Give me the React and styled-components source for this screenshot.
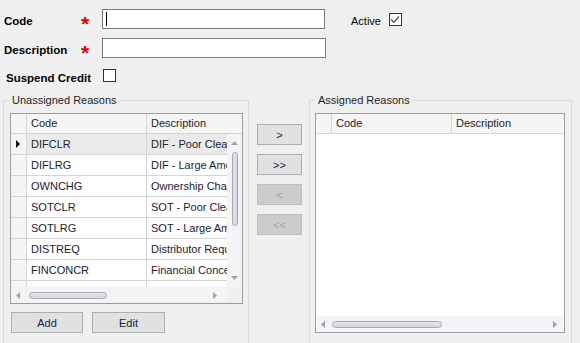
import React from "react";
import styled, { createGlobalStyle } from "styled-components";

const GlobalStyle = createGlobalStyle`
  html, body {
    margin: 0;
    padding: 0;
    background: #f0f0f0;
    font-family: "Liberation Sans", Arial, sans-serif;
    font-size: 11px;
    color: #1e1e1e;
  }
`;

const unassigned = [
  { code: "DIFCLR", desc: "DIF - Poor Clearance", current: true },
  { code: "DIFLRG", desc: "DIF - Large Amount" },
  { code: "OWNCHG", desc: "Ownership Change" },
  { code: "SOTCLR", desc: "SOT - Poor Clearance" },
  { code: "SOTLRG", desc: "SOT - Large Amount" },
  { code: "DISTREQ", desc: "Distributor Request" },
  { code: "FINCONCR", desc: "Financial Concern" },
  { code: "LEGAL", desc: "Legal Action" },
];

const Page = styled.div`
  width: 580px;
  height: 343px;
  overflow: hidden;
  padding-top: 9px;
  box-sizing: border-box;
`;

const FormRow = styled.div`
  display: flex;
  align-items: center;
  height: ${(p) => p.$height || 20}px;
  margin-top: ${(p) => p.$gap || 0}px;
`;

const Label = styled.div`
  width: ${(p) => p.$width}px;
  flex-shrink: 0;
  padding-left: ${(p) => p.$indent || 4}px;
  padding-top: 4px;
  font-size: 11.5px;
  font-weight: bold;
  color: #000;
  box-sizing: border-box;
  white-space: nowrap;
`;

const Required = styled.div`
  width: 21px;
  height: 20px;
  flex-shrink: 0;
  color: #e00000;
  font-weight: bold;
  font-size: 21px;
  line-height: 20px;
  padding-top: 5px;
  box-sizing: border-box;
`;

const TextField = styled.div`
  width: ${(p) => p.$width}px;
  height: 20px;
  flex-shrink: 0;
  box-sizing: border-box;
  border: 1px solid #7a7a7a;
  background: #fff;
  display: flex;
  align-items: center;
`;

const Caret = styled.span`
  width: 1px;
  height: 14px;
  margin-left: 3px;
  background: #000;
`;

const PlainLabel = styled.span`
  margin-left: 26px;
  margin-right: 8px;
  color: #000;
  padding-top: 3px;
`;

const CheckBox = styled.div`
  width: 13px;
  height: 13px;
  box-sizing: border-box;
  border: 1px solid #333;
  background: #fff;
  display: flex;
  align-items: center;
  justify-content: center;
`;

const Main = styled.div`
  display: flex;
  align-items: flex-start;
  margin-top: 11px;
`;

const Group = styled.fieldset`
  margin: 0 0 0 ${(p) => p.$left}px;
  padding: 0;
  width: ${(p) => p.$width}px;
  height: 262px;
  min-width: 0;
  flex-shrink: 0;
  box-sizing: border-box;
  border: 1px solid #dcdcdc;
  display: flex;
  flex-direction: column;
`;

const Legend = styled.legend`
  margin-left: 6px;
  padding: 0 2px;
  line-height: 14px;
  color: #1e1e1e;
`;

const Grid = styled.div`
  width: ${(p) => p.$width}px;
  height: ${(p) => p.$height}px;
  margin: 6px 0 0 ${(p) => p.$left}px;
  box-sizing: border-box;
  border: 1px solid #9b9ba6;
  background: #fff;
  display: flex;
  flex-direction: column;
  overflow: hidden;
`;

const HeaderRow = styled.div`
  display: grid;
  grid-template-columns: 16px 120px 1fr;
  height: 20px;
  box-sizing: border-box;
  border-bottom: 1px solid #d5d5d5;
  background: #f5f5f5;
  flex-shrink: 0;
`;

const HeaderCell = styled.div`
  border-right: ${(p) => (p.$last ? "none" : "1px solid #d5d5d5")};
  padding-left: 4px;
  line-height: 19px;
  color: #1e1e1e;
  white-space: nowrap;
  overflow: hidden;
`;

const Body = styled.div`
  flex: 1;
  display: flex;
  min-height: 0;
  overflow: hidden;
`;

const Rows = styled.div`
  flex: 1;
  min-width: 0;
  overflow: hidden;
`;

const DataRow = styled.div`
  display: grid;
  grid-template-columns: 16px 120px 1fr;
  height: 21px;
  box-sizing: border-box;
  border-bottom: 1px solid #d5d5d5;
  background: ${(p) => (p.$current ? "#eaeaea" : "#fff")};
`;

const RowHeader = styled.div`
  border-right: 1px solid #d5d5d5;
  background: #f5f5f5;
  display: flex;
  align-items: center;
  justify-content: center;
`;

const Cell = styled.div`
  border-right: ${(p) => (p.$last ? "none" : "1px solid #d5d5d5")};
  padding-left: 4px;
  line-height: 20px;
  color: #1c1c30;
  white-space: nowrap;
  overflow: hidden;
`;

const VScroll = styled.div`
  width: 15px;
  flex-shrink: 0;
  background: #f4f4f6;
  display: flex;
  flex-direction: column;
  align-items: center;
  padding: 6px 0;
  box-sizing: border-box;
`;

const VThumb = styled.div`
  width: 6px;
  height: 74px;
  margin-top: 6px;
  box-sizing: border-box;
  border: 1px solid #a8a8b2;
  border-radius: 4px;
  background: linear-gradient(to right, #e4e4e8, #d6d6dc);
`;

const HScrollRow = styled.div`
  height: 16px;
  flex-shrink: 0;
  display: flex;
  background: #f4f4f6;
`;

const HTrack = styled.div`
  flex: 1;
  display: flex;
  align-items: center;
  padding: 0 ${(p) => p.$right}px 0 4px;
`;

const HThumb = styled.div`
  width: ${(p) => p.$width}px;
  height: 7px;
  margin-left: ${(p) => p.$gap}px;
  box-sizing: border-box;
  border: 1px solid #a8a8b2;
  border-radius: 4px;
  background: linear-gradient(#e6e6ea, #d6d6dc);
`;

const Spacer = styled.div`
  flex: 1;
`;

const Corner = styled.div`
  width: 15px;
  background: #f0f0f2;
`;

const ButtonRow = styled.div`
  display: flex;
  gap: 9px;
  margin: 8px 0 0 7px;
`;

const WinButton = styled.button`
  width: ${(p) => p.$width}px;
  height: 21px;
  padding: 0;
  box-sizing: border-box;
  font-family: inherit;
  font-size: 11px;
  border: 1px solid ${(p) => (p.disabled ? "#bfbfbf" : "#adadad")};
  background: ${(p) => (p.disabled ? "#cccccc" : "#e1e1e1")};
  color: ${(p) => (p.disabled ? "#a0a0a0" : "#1a1a3c")};
`;

const MoveColumn = styled.div`
  display: flex;
  flex-direction: column;
  gap: 9px;
  margin-left: 8px;
  padding-top: 31px;
`;

const Tri = ({ dir }) => {
  const pts = {
    up: "0,5 3.5,1 7,5",
    down: "0,1 3.5,5 7,1",
    left: "5,0 1,3.5 5,7",
    right: "1,0 5,3.5 1,7",
  }[dir];
  const vertical = dir === "up" || dir === "down";
  return (
    <svg width={vertical ? 7 : 6} height={vertical ? 6 : 7} viewBox={vertical ? "0 0 7 6" : "0 0 6 7"}>
      <polygon points={pts} fill="#a0a0a6" />
    </svg>
  );
};

const RowMarker = () => (
  <svg width="5" height="8" viewBox="0 0 5 8">
    <polygon points="0,0 4,4 0,8" fill="#000" />
  </svg>
);

const Check = () => (
  <svg width="10" height="9" viewBox="0 0 10 9">
    <polyline points="1,4.5 3.8,7.2 9,1.5" fill="none" stroke="#555" strokeWidth="1.3" />
  </svg>
);

function GridHeader() {
  return (
    <HeaderRow>
      <HeaderCell />
      <HeaderCell>Code</HeaderCell>
      <HeaderCell $last>Description</HeaderCell>
    </HeaderRow>
  );
}

export default function App() {
  return (
    <>
      <GlobalStyle />
      <Page>
        <FormRow>
          <Label $width={81}>Code</Label>
          <Required>*</Required>
          <TextField $width={223}>
            <Caret />
          </TextField>
          <PlainLabel>Active</PlainLabel>
          <CheckBox>
            <Check />
          </CheckBox>
        </FormRow>
        <FormRow $gap={9}>
          <Label $width={81}>Description</Label>
          <Required>*</Required>
          <TextField $width={224} />
        </FormRow>
        <FormRow $gap={11} $height={13}>
          <Label $width={103} $indent={6}>
            Suspend Credit
          </Label>
          <CheckBox />
        </FormRow>

        <Main>
          <Group $left={3} $width={246}>
            <Legend>Unassigned Reasons</Legend>
            <Grid $width={233} $height={191} $left={6}>
              <GridHeader />
              <Body>
                <Rows>
                  {unassigned.map((r) => (
                    <DataRow key={r.code} $current={r.current}>
                      <RowHeader>{r.current && <RowMarker />}</RowHeader>
                      <Cell>{r.code}</Cell>
                      <Cell $last>{r.desc}</Cell>
                    </DataRow>
                  ))}
                </Rows>
                <VScroll>
                  <Tri dir="up" />
                  <VThumb />
                  <Spacer />
                  <Tri dir="down" />
                </VScroll>
              </Body>
              <HScrollRow>
                <HTrack $right={9}>
                  <Tri dir="left" />
                  <HThumb $width={78} $gap={8} />
                  <Spacer />
                  <Tri dir="right" />
                </HTrack>
                <Corner />
              </HScrollRow>
            </Grid>
            <ButtonRow>
              <WinButton $width={72}>Add</WinButton>
              <WinButton $width={73}>Edit</WinButton>
            </ButtonRow>
          </Group>

          <MoveColumn>
            <WinButton $width={45}>&gt;</WinButton>
            <WinButton $width={45}>&gt;&gt;</WinButton>
            <WinButton $width={45} disabled>
              &lt;
            </WinButton>
            <WinButton $width={45} disabled>
              &lt;&lt;
            </WinButton>
          </MoveColumn>

          <Group $left={7} $width={263}>
            <Legend>Assigned Reasons</Legend>
            <Grid $width={250} $height={220} $left={5}>
              <GridHeader />
              <Body />
              <HScrollRow>
                <HTrack $right={6}>
                  <Tri dir="left" />
                  <HThumb $width={110} $gap={6} />
                  <Spacer />
                  <Tri dir="right" />
                </HTrack>
              </HScrollRow>
            </Grid>
          </Group>
        </Main>
      </Page>
    </>
  );
}
